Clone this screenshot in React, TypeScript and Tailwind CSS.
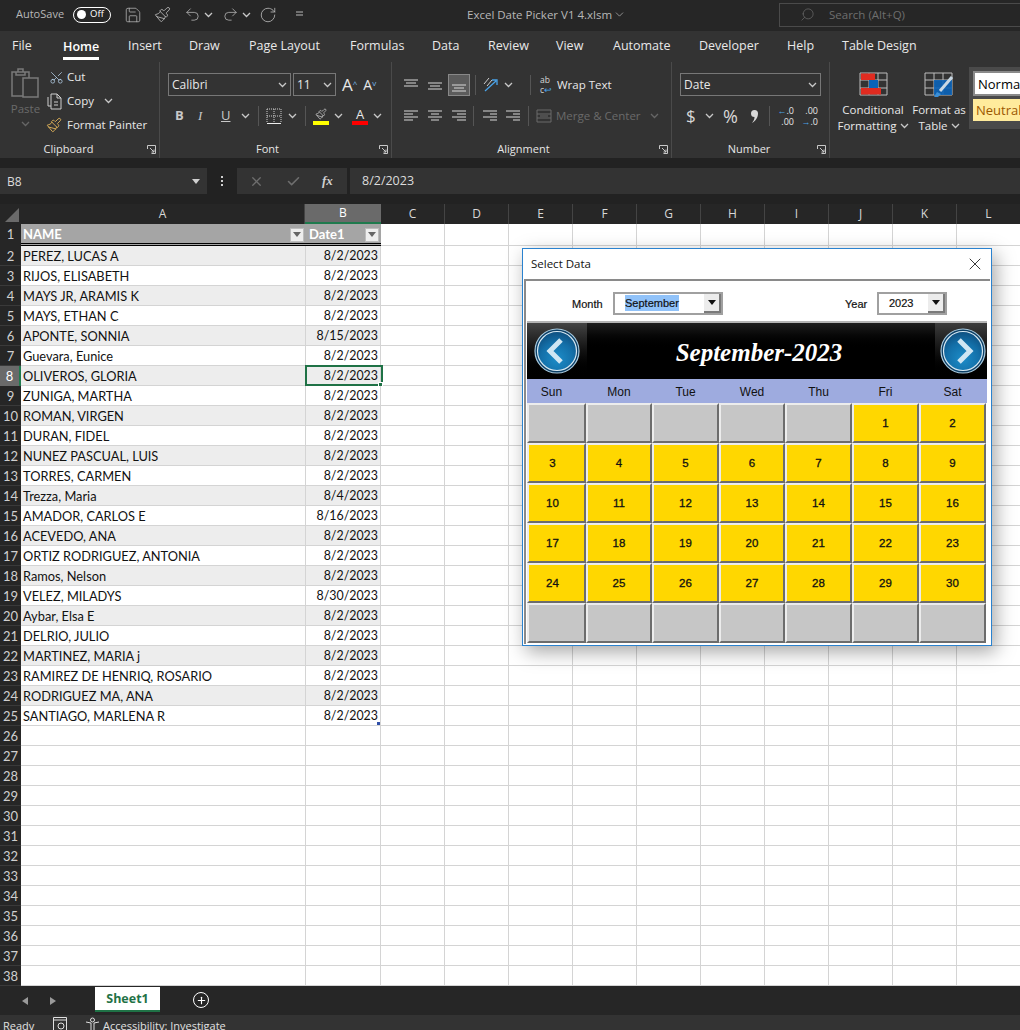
import React from "react";
import { Save, Paintbrush, Undo2, Redo2, RotateCw, ChevronDown, Search, Scissors, X, Check, Plus } from "lucide-react";

const Chev = ({ c = "#c8c8c8" }: { c?: string }) => (
  <svg width="9" height="6" viewBox="0 0 9 6" className="shrink-0"><path d="M1 1l3.500 3.500L8 1" fill="none" stroke={c} strokeWidth="1.300" /></svg>
);
const Lines = ({ ys, xs, c = "#d8d8d8" }: { ys: number[]; xs: [number, number][]; c?: string }) => (
  <svg width="16" height="16" viewBox="0 0 16 16" className="shrink-0">
    {ys.map((y, i) => <path key={i} d={`M${xs[i][0]} ${y}H${xs[i][1]}`} stroke={c} strokeWidth="1" />)}
  </svg>
);
const Sep = ({ h = "h-[20px]" }: { h?: string }) => <div className={`w-px bg-[#555] shrink-0 ${h}`} />;
const Launcher = () => (
  <svg width="9" height="9" viewBox="0 0 9 9" className="shrink-0"><path d="M.5 4V.5H8.500V8.500H4.500M3 3l4 4M7 4.500V7H4.500" fill="none" stroke="#c8c8c8" strokeWidth="1" /></svg>
);

const Group = ({ w, label, lc, children }: { w: string; label: string; lc: string; children: React.ReactNode }) => (
  <div className={`${w} shrink-0 h-[96px] flex flex-col border-r border-[#4a4a4a]`}>
    <div className="h-[78px] pt-[8px]">{children}</div>
    <div className="h-[18px] flex items-center">
      <span className={`flex-1 text-center text-[#e6e6e6] text-[11px] ${lc}`}>{label}</span>
      <span className="mr-[3px]"><Launcher /></span>
    </div>
  </div>
);

const tabs: [string, string][] = [["File", "w-[51px]"], ["Home", "w-[65px]"], ["Insert", "w-[61px]"], ["Draw", "w-[60px]"], ["Page Layout", "w-[101px]"], ["Formulas", "w-[82px]"], ["Data", "w-[56px]"], ["Review", "w-[68px]"], ["View", "w-[57px]"], ["Automate", "w-[86px]"], ["Developer", "w-[88px]"], ["Help", "w-[55px]"], ["Table Design", "w-[100px]"]];

const names: [string, string][] = [["PEREZ, LUCAS A", "8/2/2023"], ["RIJOS, ELISABETH", "8/2/2023"], ["MAYS JR, ARAMIS K", "8/2/2023"], ["MAYS, ETHAN C", "8/2/2023"], ["APONTE, SONNIA", "8/15/2023"], ["Guevara, Eunice", "8/2/2023"], ["OLIVEROS, GLORIA", "8/2/2023"], ["ZUNIGA, MARTHA", "8/2/2023"], ["ROMAN, VIRGEN", "8/2/2023"], ["DURAN, FIDEL", "8/2/2023"], ["NUNEZ PASCUAL, LUIS", "8/2/2023"], ["TORRES, CARMEN", "8/2/2023"], ["Trezza, Maria", "8/4/2023"], ["AMADOR, CARLOS E", "8/16/2023"], ["ACEVEDO, ANA", "8/2/2023"], ["ORTIZ RODRIGUEZ, ANTONIA", "8/2/2023"], ["Ramos, Nelson", "8/2/2023"], ["VELEZ, MILADYS", "8/30/2023"], ["Aybar, Elsa E", "8/2/2023"], ["DELRIO, JULIO", "8/2/2023"], ["MARTINEZ, MARIA j", "8/2/2023"], ["RAMIREZ DE HENRIQ, ROSARIO", "8/2/2023"], ["RODRIGUEZ MA, ANA", "8/2/2023"], ["SANTIAGO, MARLENA R", "8/2/2023"]];
const extra = ["C", "D", "E", "F", "G", "H", "I", "J", "K", "L"];

const FilterBtn = () => (
  <span className="w-[14px] h-[14px] bg-[#eeeeee] border border-[#bdbdbd] flex items-center justify-center shrink-0">
    <svg width="8" height="5" viewBox="0 0 8 5"><path d="M0 0h8L4 5z" fill="#666" /></svg>
  </span>
);
const EmptyCols = () => <>{extra.map((c) => <div key={c} className="w-[64px] shrink-0 h-full border-r border-b border-[#d4d4d4] bg-white" />)}</>;

const Row = ({ n, name, date }: { n: number; name?: string; date?: string }) => {
  const band = name && n % 2 === 0;
  const sel = n === 8;
  return (
    <div className="flex h-[20px]">
      <div className={`w-[21px] shrink-0 flex items-center justify-center pt-[2px] text-[13px] ${sel ? "bg-[#6a6a6a] text-white border-r-2 border-[#1f7a4d]" : "bg-[#262626] text-[#d0d0d0] border-b border-[#3a3a3a]"}`}>{n}</div>
      <div className={`w-[285px] shrink-0 h-full border-r border-b border-[#d4d4d4] pl-[2px] pt-[2px] flex items-center text-[12.8px] text-[#111] whitespace-nowrap overflow-hidden ${band ? "bg-[#ededed]" : "bg-white"}`}>{name}</div>
      <div className={`w-[75px] shrink-0 h-full border-r border-b border-[#d4d4d4] pr-[2px] pt-[2px] flex items-center justify-end text-[12.4px] text-[#111] relative ${band ? "bg-[#ededed]" : "bg-white"}`}>
        {date}
        {sel && <span className="absolute -left-px -top-px w-[78px] h-[21px] border-2 border-[#1f7246]" />}
        {sel && <span className="absolute -right-[3px] -bottom-[2px] w-[5px] h-[5px] bg-[#1f7246] border border-white" />}
        {n === 25 && <span className="absolute right-0 bottom-0 w-[3px] h-[3px] bg-[#2f4fa8]" />}
      </div>
      <EmptyCols />
    </div>
  );
};

const weeks: (number | null)[][] = [
  [null, null, null, null, null, 1, 2],
  [3, 4, 5, 6, 7, 8, 9],
  [10, 11, 12, 13, 14, 15, 16],
  [17, 18, 19, 20, 21, 22, 23],
  [24, 25, 26, 27, 28, 29, 30],
  [null, null, null, null, null, null, null],
];

const Orb = ({ dir, id }: { dir: "l" | "r"; id: string }) => (
  <svg width="46" height="46" viewBox="0 0 46 46">
    <defs>
      <radialGradient id={id} cx="50%" cy="70%" r="70%"><stop offset="0%" stopColor="#1c8cc8" /><stop offset="60%" stopColor="#136fa8" /><stop offset="100%" stopColor="#0e4f80" /></radialGradient>
    </defs>
    <circle cx="23" cy="23" r="22" fill="#0c3f66" stroke="#a8cbe0" strokeWidth="1.200" />
    <circle cx="23" cy="23" r="19.500" fill={`url(#${id})`} stroke="#d6e8f2" strokeWidth="1.200" />
    <path d={dir === "l" ? "M27 12L16 23l11 11" : "M19 12l11 11-11 11"} fill="none" stroke="#cfe6f3" strokeWidth="5" />
  </svg>
);

const Combo = ({ w, tw, children }: { w: string; tw: string; children: React.ReactNode }) => (
  <div className={`${w} h-[23px] border-2 border-[#a0a0a0] flex items-center bg-white`}>
    <div className={`flex-1 ${tw} pt-[1px] text-[11px] text-[#111] [-webkit-text-stroke:0.2px_#111]`}>{children}</div>
    <div className="w-[17px] h-full bg-[#ececec] border-r-2 border-b-2 border-[#7a7a7a] flex items-center justify-center">
      <svg width="8" height="5" viewBox="0 0 8 5"><path d="M0 0h8L4 5z" fill="#111" /></svg>
    </div>
  </div>
);

const Dialog = () => (
  <div className="absolute left-[522px] top-[248px] w-[470px] h-[398px] bg-white border border-[#2a82cf] shadow-[4px_6px_18px_rgba(0,0,0,0.35)] flex flex-col font-['Liberation_Sans',sans-serif]">
    <div className="h-[30px] shrink-0 flex items-center justify-between pl-[8px] pr-[6px] font-['Open_Sans',sans-serif] text-[11.5px] text-[#111]">
      <span>Select Data</span>
      <X size={20} strokeWidth={1} color="#111" />
    </div>
    <div className="flex-1 mx-[1px] mb-[1px] border-t-2 border-l-2 border-[#8a8a8a] pl-[1px] pr-[3px] flex flex-col">
      <div className="h-[42px] shrink-0 border-b-2 border-[#b4b4b4] flex items-center pt-[4px]">
        <span className="ml-[45px] w-[41px] text-[11px] text-[#111] pt-[3px] [-webkit-text-stroke:0.2px_#111]">Month</span>
        <Combo w="w-[110px]" tw="pl-[10px]"><span className="bg-[#90c2f9] py-[2px]">September</span></Combo>
        <span className="ml-[122px] w-[32px] text-[11px] text-[#111] pt-[3px] [-webkit-text-stroke:0.2px_#111]">Year</span>
        <Combo w="w-[70px]" tw="pl-[10px]"><span>2023</span></Combo>
      </div>
      <div className="h-[56px] shrink-0 bg-gradient-to-b from-[#1e1e1e] via-black to-black flex items-center justify-between">
        <div className="w-[60px] h-full bg-gradient-to-b from-[#444] via-[#111] to-black flex items-center pl-[7px]"><Orb dir="l" id="orbL" /></div>
        <span className="font-['Liberation_Serif',serif] italic font-bold text-[25px] text-white pt-[3px] mr-[4px]">September-2023</span>
        <div className="w-[52px] h-full bg-gradient-to-b from-[#3c3c3c] via-[#111] to-black flex items-center justify-end pr-[1px]"><Orb dir="r" id="orbR" /></div>
      </div>
      <div className="h-[24px] shrink-0 bg-[#9eabdf] pt-[2px] grid grid-cols-[59px_66px_67px_66px_67px_67px_67px] items-center text-[12px] text-[#111] text-center">
        {["Sun", "Mon", "Tue", "Wed", "Thu", "Fri", "Sat"].map((d, i) => <span key={d} className={i === 0 ? "pr-[10px]" : ""}>{d}</span>)}
      </div>
      <div className="grid grid-cols-[59px_66px_67px_66px_67px_67px_67px] auto-rows-[40px]">
        {weeks.flat().map((d, i) => (
          <div key={i} className={`border-2 border-t-[#ececec] border-l-[#ececec] border-b-[#6c6c6c] border-r-[#6c6c6c] flex items-center justify-center pt-[2px] text-[11.5px] text-[#111] [-webkit-text-stroke:0.3px_#111] ${d ? "bg-[#ffd700]" : "bg-[#c6c6c6]"} ${i % 7 === 0 ? "pr-[8px]" : ""}`}>{d}</div>
        ))}
      </div>
    </div>
  </div>
);

export default function App() {
  return (
    <div className="relative w-[1020px] h-[1030px] overflow-hidden bg-[#262626] font-['Open_Sans',sans-serif]">
      {/* Title bar */}
      <div className="h-[31px] bg-[#262626] flex items-center text-[#b8b8b8] pb-[2px]">
        <span className="ml-[16px] w-[57px] shrink-0 text-[11px]">AutoSave</span>
        <div className="w-[38px] h-[16px] shrink-0 rounded-full border border-white flex items-center pl-[3px]">
          <span className="w-[9px] h-[9px] rounded-full bg-white" />
          <span className="ml-[4px] text-[9.5px] text-white">Off</span>
        </div>
        <span className="ml-[13px] shrink-0"><Save size={18} strokeWidth={1} /></span>
        <span className="ml-[12px] shrink-0"><Paintbrush size={17} strokeWidth={1.2} /></span>
        <span className="ml-[13px] shrink-0"><Undo2 size={17} strokeWidth={1.1} /></span>
        <span className="ml-[3px] shrink-0"><Chev /></span>
        <span className="ml-[9px] shrink-0"><Redo2 size={17} strokeWidth={1.1} /></span>
        <span className="ml-[3px] shrink-0"><Chev /></span>
        <span className="ml-[8px] shrink-0"><RotateCw size={18} strokeWidth={1.1} /></span>
        <span className="ml-[15px] shrink-0"><Lines ys={[5, 8]} xs={[[4, 11], [4, 11]]} c="#b8b8b8" /></span>
        <span className="ml-[159px] text-[11.5px] w-[143px] shrink-0 whitespace-nowrap">Excel Date Picker V1 4.xlsm</span>
        <ChevronDown size={13} strokeWidth={1.3} className="ml-[3px] shrink-0" />
        <div className="ml-[153px] w-[241px] h-[24px] border border-[#4a4a4a] border-r-0 flex items-center shrink-0 text-[#6e6e6e]">
          <Search size={15} strokeWidth={1.1} className="ml-[20px] -scale-x-100" />
          <span className="ml-[14px] text-[11.5px]">Search (Alt+Q)</span>
        </div>
      </div>
      {/* Tabs */}
      <div className="h-[31px] bg-[#333333] flex items-center pl-[12px] text-[12.5px] text-[#e8e8e8]">
        {tabs.map(([t, w]) => (
          <div key={t} className={`${w} shrink-0 h-full flex items-center`}>
            <span className={t === "Home" ? "font-semibold text-white border-b-[3px] border-white pt-[5px] pb-[1px]" : "whitespace-nowrap"}>{t}</span>
          </div>
        ))}
      </div>
      {/* Ribbon */}
      <div className="h-[96px] bg-[#333333] flex overflow-hidden text-[#e8e8e8] text-[12px]">
        <Group w="w-[160px]" label="Clipboard" lc="pr-[10px]">
          <div className="flex -mt-[2px]">
            <div className="w-[46px] flex flex-col items-center pl-[5px]">
              <svg width="29" height="32" viewBox="0 0 29 32"><path d="M1 4h17v24H1zM7 4V1h5v3M5 4v3h9V4" fill="none" stroke="#7a7a7a" strokeWidth="1.5" /><path d="M12 10h15v19H12z" fill="#333" stroke="#7a7a7a" strokeWidth="1.5" /></svg>
              <span className="text-[#6a6a6a] text-[11.5px] leading-[16px] mt-[1px]">Paste</span>
              <span className="mt-[4px]"><Chev c="#666" /></span>
            </div>
            <div className="flex flex-col text-[11.5px] -mt-[3px]">
              <div className="h-[24px] flex items-center"><Scissors size={15} strokeWidth={1.2} color="#b8d4ee" className="-rotate-90 ml-[3px]" /><span className="ml-[3px]">Cut</span></div>
              <div className="h-[24px] flex items-center">
                <svg width="17" height="17" viewBox="0 0 17 17" className="ml-[1px]"><path d="M4 1h6l4 4v11H4zM10 1v4h4M1 4v9h3M7 9h4M7 12h4" fill="none" stroke="#cfcfcf" strokeWidth="1" /></svg>
                <span className="ml-[3px]">Copy</span><span className="ml-[10px]"><Chev /></span>
              </div>
              <div className="h-[24px] flex items-center"><Paintbrush size={16} strokeWidth={1.3} color="#e8b85a" /><span className="ml-[5px] whitespace-nowrap">Format Painter</span></div>
            </div>
          </div>
        </Group>
        <Group w="w-[232px]" label="Font" lc="pr-[4px]">
          <div className="flex items-center pl-[8px] h-[23px] mt-[3px]">
            <div className="w-[123px] h-[23px] border border-[#777] flex items-center justify-between px-[3px]"><span>Calibri</span><Chev /></div>
            <div className="ml-[2px] w-[43px] h-[23px] border border-[#777] flex items-center justify-between px-[3px]"><span>11</span><Chev /></div>
            <span className="ml-[6px] text-[17px] leading-none">A<sup className="text-[#7ab8e8] text-[8px]">^</sup></span>
            <span className="ml-[6px] text-[14px] leading-none">A<sup className="text-[#7ab8e8] text-[8px]">v</sup></span>
          </div>
          <div className="flex items-center h-[20px] mt-[10px] pl-[15px]">
            <span className="w-[23px] font-bold text-[13px] text-[#c8c8c8]">B</span>
            <span className="w-[23px] italic text-[13px] font-['Liberation_Serif',serif] text-[#c8c8c8]">I</span>
            <span className="w-[20px] underline text-[13px] text-[#c8c8c8]">U</span>
            <Chev />
            <span className="ml-[8px]"><Sep /></span>
            <svg width="16" height="16" viewBox="0 0 16 16" className="ml-[7px]"><path d="M1 1h14M1 8h14M8 1v14M1 1v14M15 1v14" stroke="#cfcfcf" strokeDasharray="1 1" fill="none" /><path d="M1 15.5h14" stroke="#eee" /></svg>
            <span className="ml-[6px]"><Chev /></span>
            <span className="ml-[8px]"><Sep /></span>
            <span className="ml-[7px] flex flex-col items-center w-[16px]"><Paintbrush size={12} strokeWidth={1.3} color="#d8d8d8" /><span className="w-[16px] h-[4px] bg-[#ffff00] mt-[1px]" /></span>
            <span className="ml-[5px]"><Chev /></span>
            <span className="ml-[9px] flex flex-col items-center w-[16px] leading-none"><span className="text-[13px] leading-[13px]">A</span><span className="w-[16px] h-[4px] bg-[#ff0000]" /></span>
            <span className="ml-[5px]"><Chev /></span>
          </div>
        </Group>
        <Group w="w-[280px]" label="Alignment" lc="pr-[4px]">
          <div className="flex items-center h-[23px] mt-[3px] pl-[11px]">
            <Lines ys={[3, 6, 9]} xs={[[1, 15], [3, 13], [1, 15]]} />
            <span className="ml-[8px]"><Lines ys={[6, 9, 12]} xs={[[1, 15], [3, 13], [1, 15]]} /></span>
            <span className="ml-[5px] w-[22px] h-[22px] bg-[#5c5c5c] border border-[#888] flex items-center justify-center"><Lines ys={[8, 11, 14]} xs={[[1, 15], [3, 13], [1, 15]]} /></span>
            <span className="ml-[5px]"><Sep /></span>
            <svg width="17" height="17" viewBox="0 0 17 17" className="ml-[6px]"><path d="M2 8l5-6M5 10l5-6" stroke="#cfcfcf" fill="none" /><path d="M3 15L14 5M10 4h5v5" stroke="#4aa3e8" strokeWidth="1.3" fill="none" /></svg>
            <span className="ml-[5px]"><Chev /></span>
            <span className="ml-[17px]"><Sep /></span>
            <span className="ml-[9px] w-[15px] text-[8.5px] leading-[10px] text-[#d8d8d8]">ab<br />c<span className="text-[#4aa3e8]">↩</span></span>
            <span className="ml-[2px] whitespace-nowrap text-[11.5px]">Wrap Text</span>
          </div>
          <div className="flex items-center h-[20px] mt-[10px] pl-[11px]">
            <Lines ys={[3, 6, 9, 12]} xs={[[1, 15], [1, 10], [1, 15], [1, 10]]} />
            <span className="ml-[8px]"><Lines ys={[3, 6, 9, 12]} xs={[[1, 15], [4, 12], [1, 15], [4, 12]]} /></span>
            <span className="ml-[8px]"><Lines ys={[3, 6, 9, 12]} xs={[[1, 15], [6, 15], [1, 15], [6, 15]]} /></span>
            <span className="ml-[6px]"><Sep /></span>
            <span className="ml-[8px]"><Lines ys={[3, 6, 9, 12]} xs={[[1, 15], [8, 15], [1, 15], [8, 15]]} /></span>
            <span className="ml-[7px]"><Lines ys={[3, 6, 9, 12]} xs={[[1, 15], [8, 15], [1, 15], [8, 15]]} /></span>
            <span className="ml-[7px]"><Sep /></span>
            <svg width="16" height="16" viewBox="0 0 16 16" className="ml-[7px]"><path d="M1 2h14v12H1zM1 6h14M1 10h14M4 8h8" stroke="#6a6a6a" fill="none" /></svg>
            <span className="ml-[4px] text-[#6a6a6a] whitespace-nowrap text-[11.5px]">Merge &amp; Center</span>
            <span className="ml-[9px]"><Chev c="#666" /></span>
          </div>
        </Group>
        <Group w="w-[158px]" label="Number" lc="pl-[9px]">
          <div className="h-[23px] mt-[3px] ml-[8px] w-[141px] border border-[#777] flex items-center justify-between px-[3px]"><span>Date</span><Chev /></div>
          <div className="flex items-center h-[20px] mt-[10px] pl-[14px]">
            <span className="w-[19px] text-[17px] text-[#d8d8d8]">$</span>
            <Chev />
            <span className="ml-[9px] text-[18px] text-[#d8d8d8] w-[20px]">%</span>
            <svg width="9" height="13" viewBox="0 0 9 13" className="ml-[8px] mr-[3px]"><path d="M3.500 0a3.500 3.500 0 013.500 3.500c0 4-2.500 7.500-6 9.500 1.500-2 2.500-3.500 2.500-6a3.500 3.500 0 010-7z" fill="#d8d8d8" /></svg>
            <span className="ml-[6px]"><Sep /></span>
            <span className="ml-[7px] w-[17px] text-[9px] leading-[11px] text-right whitespace-nowrap"><span className="text-[#4aa3e8]">←</span>.0<br />.00</span>
            <span className="ml-[7px] w-[17px] text-[9px] leading-[11px] text-right whitespace-nowrap">.00<br /><span className="text-[#4aa3e8]">→</span>.0</span>
          </div>
        </Group>
        <div className="flex-1 flex pt-[10px] text-[11.5px] leading-[16px]">
          <div className="w-[86px] flex flex-col items-center shrink-0">
            <svg width="29" height="24" viewBox="0 0 29 24"><path d="M1 1h27v22H1zM1 8h27M1 16h27M10 1v22M19 1v22" fill="none" stroke="#bdbdbd" /><path d="M2 1.500h14V8H2zM2 16h20v6.500H2z" fill="#e02b20" /><path d="M10 8h9v8h-9z" fill="#0a63b8" /></svg>
            <span className="mt-[6px]">Conditional</span>
            <span className="flex items-center gap-[3px]">Formatting <Chev /></span>
          </div>
          <div className="w-[46px] flex flex-col items-center shrink-0 whitespace-nowrap">
            <svg width="30" height="26" viewBox="0 0 30 26"><path d="M1 1h27v22H1zM1 8h27M1 16h27M10 1v22M19 1v22" fill="none" stroke="#bdbdbd" /><path d="M10 8h18v15H10z" fill="#0a63b8" fillOpacity="0.9" /><path d="M28 5L16 19" stroke="#c8d8e4" strokeWidth="3" /><path d="M13 20l4 2-3 3-4 0z" fill="#3a8fd8" /></svg>
            <span className="mt-[4px]">Format as</span>
            <span className="flex items-center gap-[3px]">Table <Chev /></span>
          </div>
          <div className="ml-[7px] -mt-[5px] w-[60px] h-[62px] bg-[#4a4a4a] pl-[4px] pt-[4px] shrink-0 overflow-hidden">
            <div className="h-[25px] bg-white border-2 border-[#8a8a8a] text-black flex items-center pl-[3px] text-[13px]">Normal</div>
            <div className="h-[22px] mt-[3px] bg-[#ffeb9c] text-[#9c5700] flex items-center pl-[3px] text-[13px]">Neutral</div>
          </div>
        </div>
      </div>
      {/* Formula bar */}
      <div className="h-[36px] bg-[#222222] flex items-end text-[#dcdcdc] text-[12px]">
        <div className="w-[207px] h-[26px] bg-[#333333] flex items-center justify-between px-[7px] pt-[1px]">
          <span>B8</span>
          <svg width="8" height="5" viewBox="0 0 8 5"><path d="M0 0h8L4 5z" fill="#d0d0d0" /></svg>
        </div>
        <div className="w-[30px] h-[26px] flex flex-col items-center justify-center gap-[2px]">
          <span className="w-[2px] h-[2px] bg-[#d0d0d0]" /><span className="w-[2px] h-[2px] bg-[#d0d0d0]" /><span className="w-[2px] h-[2px] bg-[#d0d0d0]" />
        </div>
        <div className="w-[110px] h-[26px] bg-[#333333] flex items-center pl-[12px]">
          <X size={15} strokeWidth={2} color="#6e6e6e" />
          <Check size={15} strokeWidth={2.5} color="#6e6e6e" className="ml-[22px]" />
          <span className="ml-[21px] font-['Liberation_Serif',serif] italic font-bold text-[13px] text-[#d0d0d0]">fx</span>
        </div>
        <div className="ml-[3px] flex-1 h-[26px] bg-[#333333] flex items-center pl-[12px] pt-[1px] text-[12.5px]">8/2/2023</div>
      </div>
      <div className="h-[10px] bg-[#222222]" />
      {/* Column header */}
      <div className="flex h-[20px] bg-[#262626] text-[12px] text-[#d8d8d8]">
        <div className="w-[21px] shrink-0 flex items-end justify-end pr-[2px] pb-[2px]">
          <svg width="14" height="14" viewBox="0 0 14 14"><path d="M14 0v14H0z" fill="#6a6a6a" /></svg>
        </div>
        <div className="w-[284px] shrink-0 flex items-center justify-center border-r border-[#444]">A</div>
        <div className="w-[76px] shrink-0 flex items-center justify-center bg-[#6a6a6a] text-white border-b-2 border-[#1f7a4d]">B</div>
        {extra.map((c) => <div key={c} className="w-[64px] shrink-0 flex items-center justify-center border-r border-[#444]">{c}</div>)}
      </div>
      {/* Grid */}
      <div className="font-['Lato',sans-serif]">
        <div className="flex h-[22px]">
          <div className="w-[21px] shrink-0 flex items-center justify-center text-[13px] bg-[#262626] text-[#d0d0d0]">1</div>
          <div className="w-[285px] shrink-0 h-[22px] bg-[#a5a5a5] border-b-[3px] border-double border-black flex items-center justify-between pl-[2px] pr-[2px] pt-[2px] text-white font-bold text-[13px]"><span>NAME</span><FilterBtn /></div>
          <div className="w-[75px] shrink-0 h-[22px] bg-[#a5a5a5] border-b-[3px] border-double border-black flex items-center justify-between pl-[3px] pr-[2px] pt-[2px] text-white font-bold text-[13px]"><span>Date1</span><FilterBtn /></div>
          <EmptyCols />
        </div>
        {names.map(([nm, d], i) => <Row key={i} n={i + 2} name={nm} date={d} />)}
        {Array.from({ length: 13 }, (_, i) => <Row key={i} n={i + 26} />)}
      </div>
      {/* Sheet tabs */}
      <div className="h-[29px] bg-[#262626] flex items-start text-[#9a9a9a]">
        <svg width="6" height="8" viewBox="0 0 6 8" className="ml-[22px] mt-[11px]"><path d="M6 0v8L0 4z" fill="#9a9a9a" /></svg>
        <svg width="6" height="8" viewBox="0 0 6 8" className="ml-[22px] mt-[11px]"><path d="M0 0v8l6-4z" fill="#9a9a9a" /></svg>
        <div className="ml-[39px] mt-[1px] w-[65px] h-[25px] bg-white border-b-2 border-[#1f7246] flex items-center justify-center pt-[2px] text-[#1f7246] font-bold text-[12.5px]">Sheet1</div>
        <div className="ml-[33px] mt-[6px] w-[16px] h-[16px] rounded-full border border-white flex items-center justify-center"><Plus size={11} strokeWidth={2.5} color="#fff" /></div>
      </div>
      {/* Status */}
      <div className="h-[15px] bg-[#333333] flex items-start text-[#e0e0e0] text-[11px] leading-[18px] pt-[2px] overflow-hidden">
        <span className="ml-[3px] w-[30px]">Ready</span>
        <svg width="14" height="15" viewBox="0 0 14 15" className="ml-[20px]"><path d="M.5.5h13V15H.5zM.5 3h13" stroke="#e0e0e0" fill="none" /><circle cx="8" cy="9" r="3" stroke="#e0e0e0" fill="none" /></svg>
        <svg width="15" height="15" viewBox="0 0 15 15" className="ml-[18px]"><circle cx="7.5" cy="3" r="2" stroke="#e0e0e0" fill="none" /><path d="M1 5l5 1v9M14 5L9 6v9" stroke="#e0e0e0" fill="none" /></svg>
        <span className="ml-[3px] whitespace-nowrap">Accessibility: Investigate</span>
      </div>
      <Dialog />
    </div>
  );
}
